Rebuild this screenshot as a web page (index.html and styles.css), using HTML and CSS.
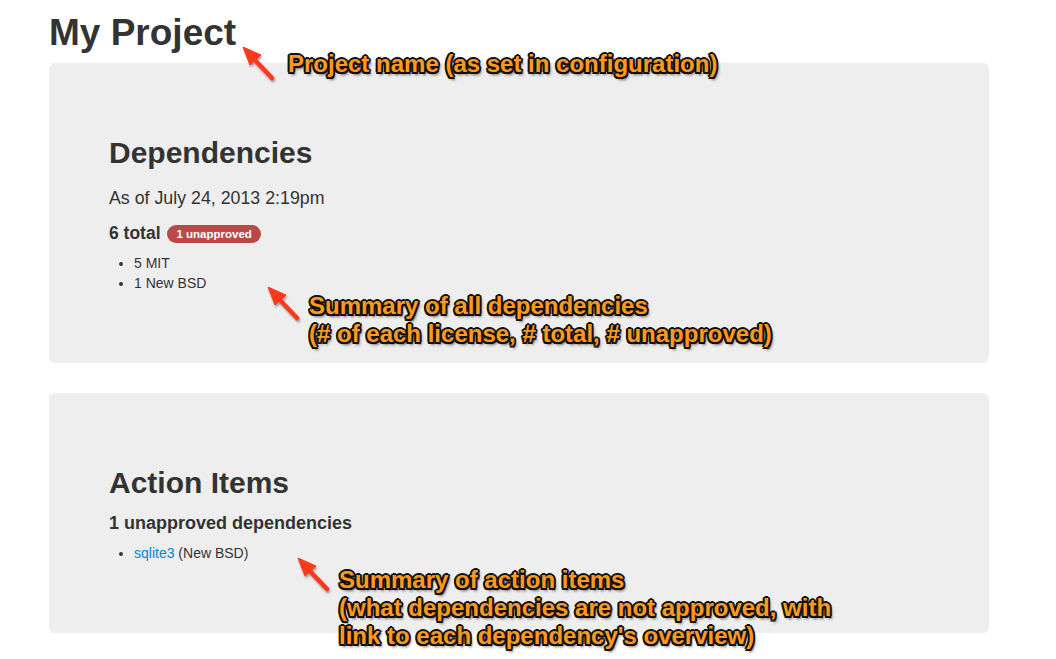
FILE: index.html
```html
<!DOCTYPE html>
<html>
<head>
<meta charset="utf-8">
<title>My Project</title>
<link rel="stylesheet" href="styles.css">
</head>
<body>
<div class="container">
  <h1 class="project-name">My Project</h1>

  <section class="hero-unit">
    <h2>Dependencies</h2>
    <p class="lead">As of July 24, 2013 2:19pm</p>
    <h4>6 total <span class="badge">1 unapproved</span></h4>
    <ul>
      <li>5 MIT</li>
      <li>1 New BSD</li>
    </ul>
  </section>

  <section class="hero-unit">
    <h2>Action Items</h2>
    <h4 class="plain">1 unapproved dependencies</h4>
    <ul>
      <li><a href="#sqlite3">sqlite3</a> (New BSD)</li>
    </ul>
  </section>
</div>

<svg class="arrow arrow-1" width="40" height="40" viewBox="0 0 40 40"><g class="arrow-shape"><path d="M33 35 L14 15" /><polygon points="4,4 11,22 22,12" /></g></svg>
<svg class="arrow arrow-2" width="40" height="40" viewBox="0 0 40 40"><g class="arrow-shape"><path d="M33 35 L14 15" /><polygon points="4,4 11,22 22,12" /></g></svg>
<svg class="arrow arrow-3" width="40" height="40" viewBox="0 0 40 40"><g class="arrow-shape"><path d="M33 35 L14 15" /><polygon points="4,4 11,22 22,12" /></g></svg>

<div class="note note-1">Project name (as set in configuration)</div>
<div class="note note-2">Summary of all dependencies<br>(# of each license, # total, # unapproved)</div>
<div class="note note-3">Summary of action items<br>(what dependencies are not approved, with<br>link to each dependency's overview)</div>
</body>
</html>
```

FILE: styles.css
```css
* { box-sizing: border-box; }

html, body {
  margin: 0;
  padding: 0;
  background: #fff;
}

body {
  font-family: "Liberation Sans", Arial, sans-serif;
  font-size: 14px;
  line-height: 20px;
  color: #333;
  padding-top: 3px;
  position: relative;
  min-height: 659px;
  overflow: hidden;
}

.container {
  width: 940px;
  margin-left: 49px;
}

h1, h2, h4 {
  font-weight: bold;
  color: #333;
  margin: 10px 0;
}

.project-name {
  font-size: 37px;
  line-height: 40px;
}

.hero-unit {
  background: #eeeeee;
  border-radius: 6px;
  padding: 60px;
  margin-bottom: 30px;
}

.hero-unit h2 {
  font-size: 30px;
  line-height: 40px;
}

.hero-unit .lead {
  font-size: 17.8px;
  line-height: 30px;
  margin: 0 0 10px;
  color: #333;
}

.hero-unit h4 {
  font-size: 17.5px;
  line-height: 20px;
}

.hero-unit h4.plain { font-size: 18px; }

.badge {
  display: inline-block;
  vertical-align: 1px;
  background: #b94a48;
  color: #fff;
  font-size: 11.5px;
  font-weight: bold;
  line-height: 14px;
  padding: 2px 9px 2px 9px;
  border-radius: 9px;
  margin-left: 2px;
}

.hero-unit ul {
  margin: 0 0 10px 25px;
  padding: 0;
  font-size: 14px;
}

.hero-unit li {
  line-height: 20px;
}

a {
  color: #0088cc;
  text-decoration: none;
}

/* annotations overlaid on the page */
.note {
  position: absolute;
  font-family: "Liberation Sans", Arial, sans-serif;
  font-weight: bold;
  font-size: 24px;
  line-height: 28px;
  color: #ff9a1e;
  white-space: nowrap;
  text-shadow:
    -2px 0 0 #111, 2px 0 0 #111, 0 -2px 0 #111, 0 2px 0 #111,
    -1.5px -1.5px 0 #111, 1.5px -1.5px 0 #111, -1.5px 1.5px 0 #111, 1.5px 1.5px 0 #111,
    2px 3px 3px rgba(0,0,0,0.6);
}

.note-1 { left: 288px; top: 50px; }
.note-2 { left: 309px; top: 292px; }
.note-3 { left: 339px; top: 566px; }

.arrow {
  position: absolute;
  overflow: visible;
}

.arrow-shape {
  fill: #ff3a1c;
  stroke: #ff3a1c;
  filter: drop-shadow(1px 2px 1px rgba(0,0,0,0.35));
}

.arrow-shape path {
  stroke-width: 4.5;
  stroke-linecap: round;
  fill: none;
}

.arrow-shape polygon {
  stroke-width: 1;
  stroke-linejoin: round;
}

.arrow-1 { left: 239px; top: 43px; }
.arrow-2 { left: 264px; top: 283px; }
.arrow-3 { left: 294px; top: 554px; }
```
